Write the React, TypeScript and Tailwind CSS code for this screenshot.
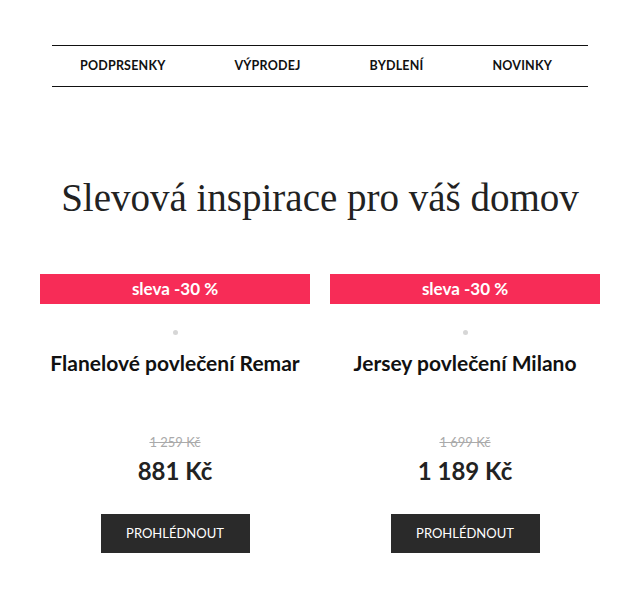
import React from 'react';

interface Product {
  name: string;
  oldPrice: string;
  price: string;
  discount: string;
}

const products: Product[] = [
  { name: 'Flanelové povlečení Remar', oldPrice: '1 259 Kč', price: '881 Kč', discount: 'sleva -30 %' },
  { name: 'Jersey povlečení Milano', oldPrice: '1 699 Kč', price: '1 189 Kč', discount: 'sleva -30 %' },
];

const navItems = ['PODPRSENKY', 'VÝPRODEJ', 'BYDLENÍ', 'NOVINKY'];

function ProductCard({ product }: { product: Product }) {
  return (
    <div className="flex flex-col items-center">
      <div className="w-full h-[30px] bg-[#f72c57] text-white text-[17px] font-bold flex items-center justify-center">
        {product.discount}
      </div>
      {/* broken image placeholder */}
      <div className="mt-[24px] h-[8px] w-[8px] flex items-center justify-center">
        <div className="h-[5px] w-[5px] rounded-full bg-[#d6d6d6]" />
      </div>
      <h3 className="mt-[14px] text-[21px] font-bold text-[#111] leading-[26px] whitespace-nowrap">{product.name}</h3>
      <div className="mt-[57px] text-[13px] text-[#aaa] line-through leading-[18px]">{product.oldPrice}</div>
      <div className="mt-[5px] text-[24px] font-bold text-[#222] leading-[30px]">{product.price}</div>
      <button className="mt-[28px] h-[39px] w-[149px] bg-[#2a2a2a] text-white text-[13px]">
        PROHLÉDNOUT
      </button>
    </div>
  );
}

export default function App() {
  return (
    <div className="min-h-[600px] bg-white font-['Lato','Noto_Sans',sans-serif] pt-[45px]">
      <nav className="mx-[52px] h-[42px] border-y border-[#111] flex items-center justify-between pl-[28px] pr-[36px]">
        {navItems.map((item) => (
          <a key={item} className="text-[12.5px] font-bold text-[#111] tracking-[0.2px]">
            {item}
          </a>
        ))}
      </nav>

      <h2 className="mt-[88px] text-center text-[39px] leading-[46px] text-[#222] font-['Liberation_Serif','DejaVu_Serif',serif]">
        Slevová inspirace pro váš domov
      </h2>

      <div className="mx-[40px] mt-[53px] grid grid-cols-2 gap-[20px]">
        {products.map((p) => (
          <ProductCard key={p.name} product={p} />
        ))}
      </div>
    </div>
  );
}
